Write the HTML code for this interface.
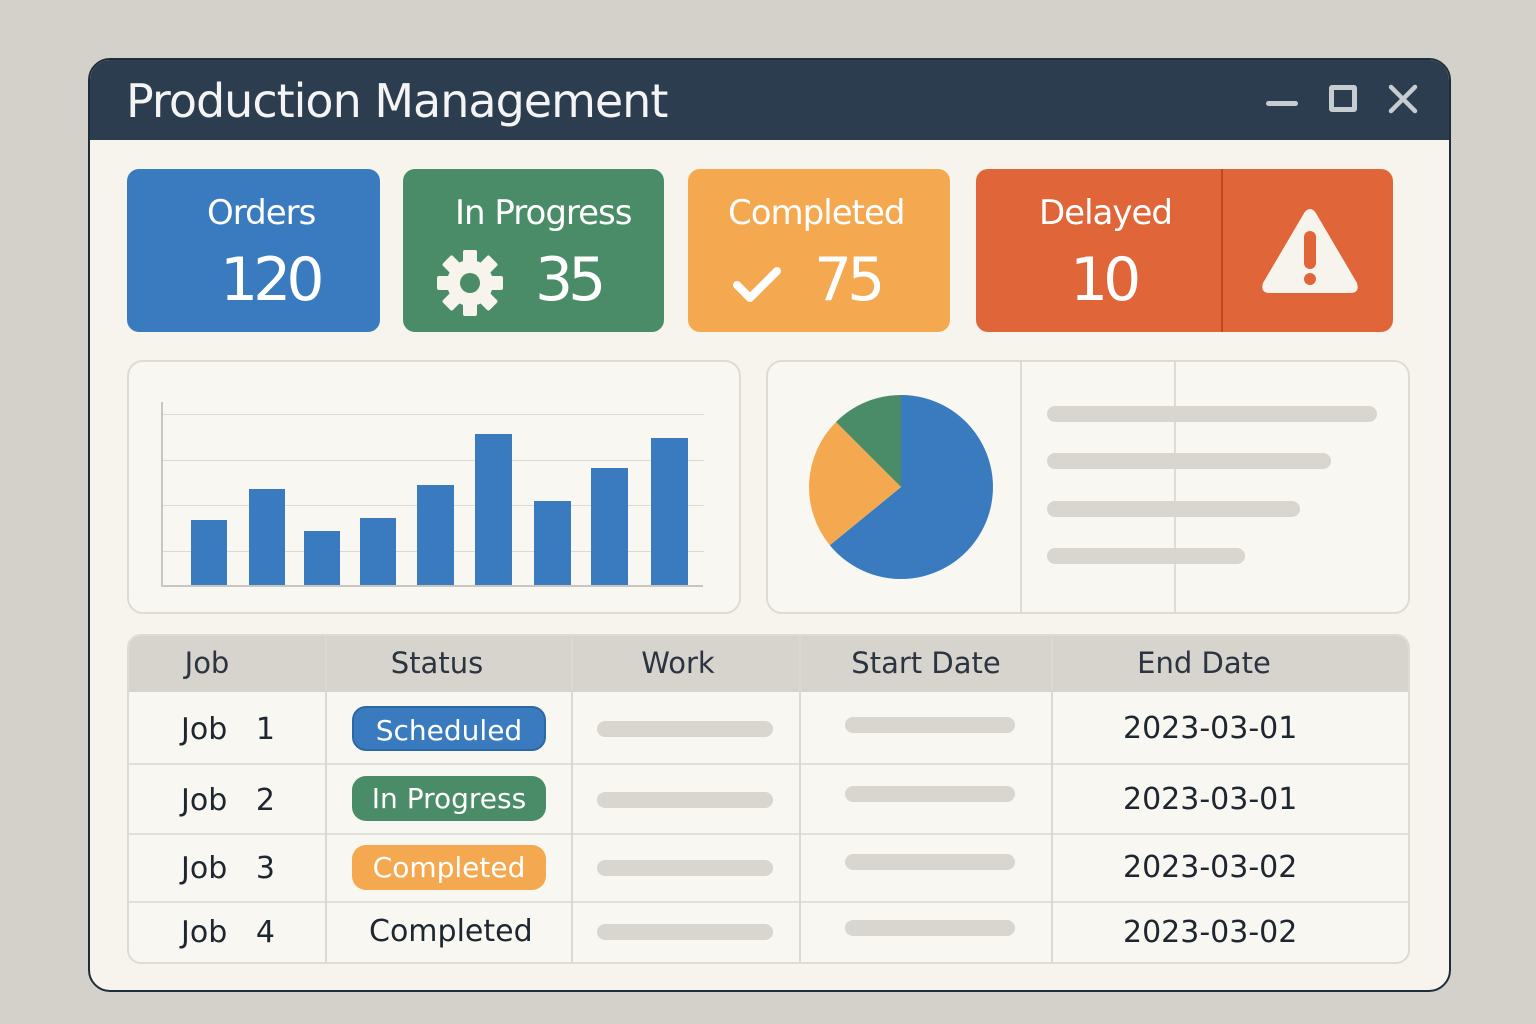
<!DOCTYPE html><html><head><style>
*{margin:0;padding:0;box-sizing:border-box}
body{width:1536px;height:1024px;background:#d4d1ca;position:relative;font-family:"DejaVu Sans","Liberation Sans",sans-serif;overflow:hidden}
.a{position:absolute}
.win{left:88px;top:58px;width:1363px;height:934px;background:#f7f4ee;border:2px solid #1f2d3b;border-radius:22px;overflow:hidden}
.hd{left:0;top:0;width:100%;height:80px;background:#2b3d4f}
.card{border-radius:12px;color:#fff;text-align:center}
.t{font-size:34px;letter-spacing:-1px}
.n{font-size:60px;letter-spacing:-5px}
.pnl{border:2px solid #dedbd4;border-radius:16px;background:#f9f7f2}
.bar{background:#3a7bbf;bottom:0}
.g{background:#d9d6d0;height:16px;border-radius:8px}
.th{font-size:29px;color:#2b3440;text-align:center;top:10px}
.td{font-size:30px;color:#1e2630}
.pill{border-radius:14px;color:#fff;font-size:28px;text-align:center;line-height:45px;height:45px;width:194px;left:223px}
</style></head><body>
<div class="a win">
 <div class="a hd"></div>
 <div class="a" style="left:36px;top:14px;font-size:46px;color:#f4f4f4;letter-spacing:-1px">Production Management</div>
 <div class="a" style="left:1176px;top:41px;width:32px;height:5px;background:#c7ccd1;border-radius:3px"></div>
 <div class="a" style="left:1239px;top:25px;width:28px;height:27px;border:5px solid #c7ccd1;border-radius:3px"></div>
 <svg class="a" style="left:1298px;top:24px" width="30" height="30"><path d="M3 3L27 27M27 3L3 27" stroke="#c7ccd1" stroke-width="4.5" stroke-linecap="round"/></svg>
</div>
<div class="a card" style="left:127px;top:169px;width:253px;height:163px;background:#3a7bbf">
 <div class="a t" style="left:80px;top:24px">Orders</div><div class="a n" style="left:93px;top:76px">120</div></div>
<div class="a card" style="left:403px;top:169px;width:261px;height:163px;background:#4a8c67">
 <div class="a t" style="left:52px;top:24px">In Progress</div><div class="a n" style="left:132px;top:76px">35</div>
 <svg class="a" style="left:33px;top:80px" width="68" height="68" viewBox="0 0 68 68"><g fill="#f7f4ee" transform="translate(34 34)"><circle r="23"/><g id="k"><rect x="-7" y="-33" width="14" height="16" rx="2"/></g><use href="#k" transform="rotate(45)"/><use href="#k" transform="rotate(90)"/><use href="#k" transform="rotate(135)"/><use href="#k" transform="rotate(180)"/><use href="#k" transform="rotate(225)"/><use href="#k" transform="rotate(270)"/><use href="#k" transform="rotate(315)"/></g><circle cx="34" cy="34" r="10" fill="#4a8c67"/></svg></div>
<div class="a card" style="left:688px;top:169px;width:262px;height:163px;background:#f4a84f">
 <div class="a t" style="left:40px;top:24px">Completed</div><div class="a n" style="left:126px;top:76px">75</div>
 <svg class="a" style="left:44px;top:96px" width="50" height="40"><path d="M5 20L18 33L45 6" stroke="#fff" stroke-width="8" fill="none" stroke-linecap="round" stroke-linejoin="round"/></svg></div>
<div class="a card" style="left:976px;top:169px;width:417px;height:163px;background:#e0663a">
 <div class="a t" style="left:63px;top:24px">Delayed</div><div class="a n" style="left:94px;top:76px">10</div>
 <div class="a" style="left:245px;top:0;width:2px;height:163px;background:#c2461f"></div>
 <svg class="a" style="left:282px;top:36px" width="104" height="92" viewBox="0 0 104 92"><path d="M52 4Q56 4 59 10L99 78Q102 88 92 88H12Q2 88 5 78L45 10Q48 4 52 4Z" fill="#f7f4ee"/><rect x="46" y="26" width="12" height="38" rx="6" fill="#e0663a"/><circle cx="52" cy="74" r="6" fill="#e0663a"/></svg></div>
<div class="a pnl" style="left:127px;top:360px;width:614px;height:254px"></div>
<div class="a" style="left:162px;top:414px;width:542px;height:1px;background:#dcd9d2"></div>
<div class="a" style="left:162px;top:460px;width:542px;height:1px;background:#dcd9d2"></div>
<div class="a" style="left:162px;top:505px;width:542px;height:1px;background:#dcd9d2"></div>
<div class="a" style="left:162px;top:551px;width:542px;height:1px;background:#dcd9d2"></div>
<div class="a" style="left:161px;top:402px;width:2px;height:184px;background:#c9c6bf"></div>
<div class="a" style="left:161px;top:585px;width:542px;height:2px;background:#c9c6bf"></div>
<div class="a bar" style="left:191px;top:520px;width:36px;height:65px"></div>
<div class="a bar" style="left:249px;top:489px;width:36px;height:96px"></div>
<div class="a bar" style="left:304px;top:531px;width:36px;height:54px"></div>
<div class="a bar" style="left:360px;top:518px;width:36px;height:67px"></div>
<div class="a bar" style="left:417px;top:485px;width:37px;height:100px"></div>
<div class="a bar" style="left:475px;top:434px;width:37px;height:151px"></div>
<div class="a bar" style="left:534px;top:501px;width:37px;height:84px"></div>
<div class="a bar" style="left:591px;top:468px;width:37px;height:117px"></div>
<div class="a bar" style="left:651px;top:438px;width:37px;height:147px"></div>
<div class="a pnl" style="left:766px;top:360px;width:644px;height:254px"></div>
<div class="a" style="left:1020px;top:362px;width:2px;height:250px;background:#dedbd4"></div>
<div class="a" style="left:1174px;top:362px;width:2px;height:250px;background:#dedbd4"></div>
<svg class="a" style="left:801px;top:387px" width="200" height="200" viewBox="-100 -100 200 200"><path d="M0 0L0 -92A92 92 0 1 1 -71.2 58.3Z" fill="#3a7bbf"/><path d="M0 0L-71.2 58.3A92 92 0 0 1 -65 -65Z" fill="#f4a84f"/><path d="M0 0L-65 -65A92 92 0 0 1 0 -92Z" fill="#4a8c67"/></svg>
<div class="a g" style="left:1047px;top:406px;width:330px"></div>
<div class="a g" style="left:1047px;top:453px;width:284px"></div>
<div class="a g" style="left:1047px;top:501px;width:253px"></div>
<div class="a g" style="left:1047px;top:548px;width:198px"></div>
<div class="a" style="left:127px;top:634px;width:1283px;height:330px;border:2px solid #dedbd4;border-radius:14px;overflow:hidden;background:#f9f7f2">
 <div class="a" style="left:0;top:0;width:100%;height:56px;background:#d7d4cd"></div>
 <div class="a" style="left:0;top:127px;width:100%;height:2px;background:#e3e0da"></div>
 <div class="a" style="left:0;top:197px;width:100%;height:2px;background:#e3e0da"></div>
 <div class="a" style="left:0;top:265px;width:100%;height:2px;background:#e3e0da"></div>
 <div class="a" style="left:196px;top:0;width:2px;height:100%;background:#dcd9d2"></div>
 <div class="a" style="left:442px;top:0;width:2px;height:100%;background:#dcd9d2"></div>
 <div class="a" style="left:670px;top:0;width:2px;height:100%;background:#dcd9d2"></div>
 <div class="a" style="left:922px;top:0;width:2px;height:100%;background:#dcd9d2"></div>
 <div class="a th" style="left:0;width:156px">Job</div>
 <div class="a th" style="left:198px;width:220px">Status</div>
 <div class="a th" style="left:444px;width:210px">Work</div>
 <div class="a th" style="left:672px;width:250px">Start Date</div>
 <div class="a th" style="left:924px;width:302px">End Date</div>
 <div class="a td" style="left:52px;top:76px">Job &nbsp; 1</div>
 <div class="a td" style="left:52px;top:147px">Job &nbsp; 2</div>
 <div class="a td" style="left:52px;top:215px">Job &nbsp; 3</div>
 <div class="a td" style="left:52px;top:279px">Job &nbsp; 4</div>
 <div class="a pill" style="top:70px;background:#3a7bbf;border:2px solid #2d68a6">Scheduled</div>
 <div class="a pill" style="top:140px;background:#4a8c67">In Progress</div>
 <div class="a pill" style="top:209px;background:#f4a84f">Completed</div>
 <div class="a td" style="left:240px;top:278px">Completed</div>
 <div class="a g" style="left:468px;top:85px;width:176px"></div>
 <div class="a g" style="left:468px;top:156px;width:176px"></div>
 <div class="a g" style="left:468px;top:224px;width:176px"></div>
 <div class="a g" style="left:468px;top:288px;width:176px"></div>
 <div class="a g" style="left:716px;top:81px;width:170px"></div>
 <div class="a g" style="left:716px;top:150px;width:170px"></div>
 <div class="a g" style="left:716px;top:218px;width:170px"></div>
 <div class="a g" style="left:716px;top:284px;width:170px"></div>
 <div class="a td" style="left:994px;top:75px">2023-03-01</div>
 <div class="a td" style="left:994px;top:146px">2023-03-01</div>
 <div class="a td" style="left:994px;top:214px">2023-03-02</div>
 <div class="a td" style="left:994px;top:279px">2023-03-02</div>
</div>
</body></html>
